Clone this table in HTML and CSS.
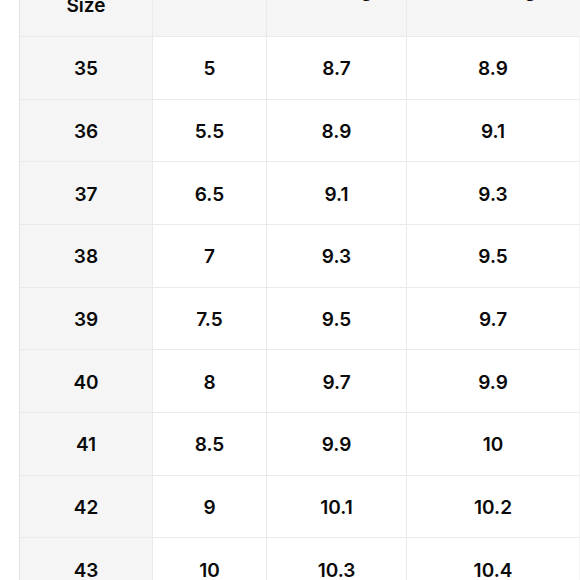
FILE: index.html
```html
<!DOCTYPE html>
<html>
<head>
<meta charset="utf-8">
<link rel="stylesheet" href="styles.css">
</head>
<body>
<div class="page">
  <div class="chart">
    <div class="cell head first">EU<br>Size</div>
    <div class="cell head">US</div>
    <div class="cell head">Foot Length</div>
    <div class="cell head last">Insole Length</div>

    <div class="cell first">35</div><div class="cell">5</div><div class="cell">8.7</div><div class="cell last">8.9</div>
    <div class="cell first">36</div><div class="cell">5.5</div><div class="cell">8.9</div><div class="cell last">9.1</div>
    <div class="cell first">37</div><div class="cell">6.5</div><div class="cell">9.1</div><div class="cell last">9.3</div>
    <div class="cell first">38</div><div class="cell">7</div><div class="cell">9.3</div><div class="cell last">9.5</div>
    <div class="cell first">39</div><div class="cell">7.5</div><div class="cell">9.5</div><div class="cell last">9.7</div>
    <div class="cell first">40</div><div class="cell">8</div><div class="cell">9.7</div><div class="cell last">9.9</div>
    <div class="cell first">41</div><div class="cell">8.5</div><div class="cell">9.9</div><div class="cell last">10</div>
    <div class="cell first">42</div><div class="cell">9</div><div class="cell">10.1</div><div class="cell last">10.2</div>
    <div class="cell first">43</div><div class="cell">10</div><div class="cell">10.3</div><div class="cell last">10.4</div>
  </div>
</div>
</body>
</html>
```
FILE: styles.css
```css
html, body {
  margin: 0;
  padding: 0;
  background: #ffffff;
  overflow: hidden;
}
.page {
  width: 580px;
  height: 580px;
  overflow: hidden;
  padding-left: 19px;
  box-sizing: border-box;
}
.chart {
  margin-top: -54px;
  display: grid;
  grid-template-columns: 133px 114px 140px 173px;
  grid-template-rows: 91px;
  grid-auto-rows: 62.667px;
  border-left: 1px solid #e4e4e4;
  font-family: Inter, "Noto Sans", sans-serif;
  font-weight: 600;
  font-size: 19px;
  color: #0a0a0a;
}
.cell {
  box-sizing: border-box;
  display: flex;
  align-items: center;
  justify-content: center;
  text-align: center;
  padding-top: 3px;
  line-height: 28px;
  border-right: 1px solid #eaeaea;
  border-bottom: 1px solid #eaeaea;
  background: #ffffff;
}
.cell.first {
  background: #f5f5f5;
}
.cell.last {
  border-right-color: #f6f6f6;
}
.cell.head {
  padding-top: 0;
  line-height: 30px;
  background: #f5f5f5;
  white-space: nowrap;
}
```
